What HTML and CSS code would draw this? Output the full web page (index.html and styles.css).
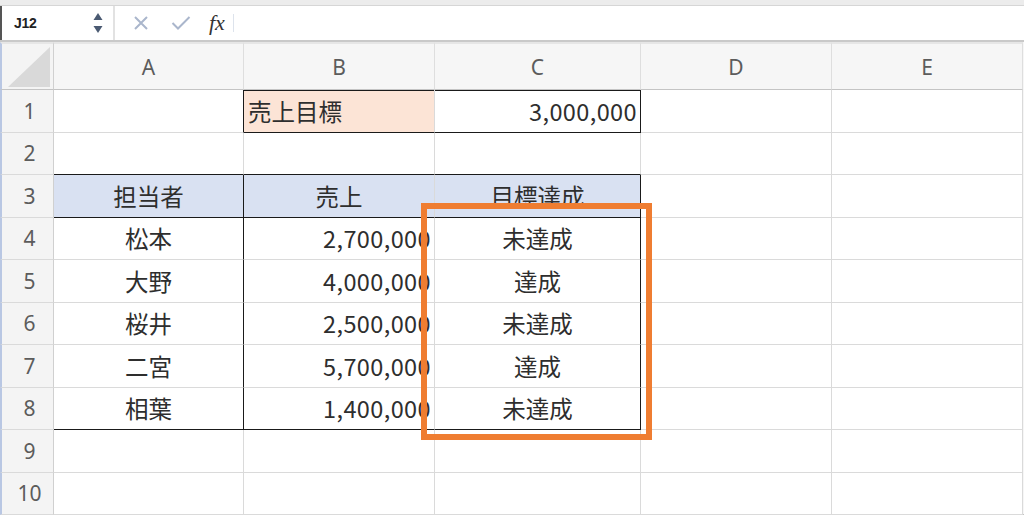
FILE: index.html
```html
<!DOCTYPE html>
<html lang="ja">
<head>
<meta charset="utf-8">
<link rel="stylesheet" href="styles.css">
</head>
<body>
<div class="topstrip"></div>
<div class="fbar">
  <div class="namebox">
    <span class="ref">J12</span>
    <span class="spin">
      <svg width="10" height="22" viewBox="0 0 10 22"><path d="M5 1 L9.5 8 L0.5 8 Z" fill="#4a5a72"/><path d="M0.5 14 L9.5 14 L5 21 Z" fill="#4a5a72"/></svg>
    </span>
  </div>
  <div class="ficons">
    <svg class="ic" width="16" height="16" viewBox="0 0 16 16"><path d="M2 2 L14 14 M14 2 L2 14" stroke="#aab6cc" stroke-width="2" fill="none"/></svg>
    <svg class="ic" width="20" height="16" viewBox="0 0 20 16"><path d="M1.5 8 L7 13.5 L18.5 2" stroke="#aab6cc" stroke-width="2" fill="none"/></svg>
    <span class="fx">fx</span>
    <span class="fsep"></span>
  </div>
</div>
<div class="sheet">
  <div class="corner"><svg width="42" height="40" viewBox="0 0 42 40"><path d="M42 0 L42 40 L0 40 Z" fill="#d9d9d9"/></svg></div>
  <div class="ch">A</div><div class="ch">B</div><div class="ch">C</div><div class="ch">D</div><div class="ch">E</div>

  <div class="rh">1</div>
  <div class="c bR"></div>
  <div class="c peach bB bT">売上目標</div>
  <div class="c num bR bB bT">3,000,000</div>
  <div class="c"></div><div class="c"></div>

  <div class="rh">2</div>
  <div class="c bB"></div><div class="c bB"></div><div class="c bB"></div>
  <div class="c"></div><div class="c"></div>

  <div class="rh">3</div>
  <div class="c blue ctr bR bB">担当者</div>
  <div class="c blue ctr bB">売上</div>
  <div class="c blue ctr bR bB">目標達成</div>
  <div class="c"></div><div class="c"></div>

  <div class="rh">4</div>
  <div class="c ctr bR">松本</div>
  <div class="c num">2,700,000</div>
  <div class="c ctr bR">未達成</div>
  <div class="c"></div><div class="c"></div>

  <div class="rh">5</div>
  <div class="c ctr bR">大野</div>
  <div class="c num">4,000,000</div>
  <div class="c ctr bR">達成</div>
  <div class="c"></div><div class="c"></div>

  <div class="rh">6</div>
  <div class="c ctr bR">桜井</div>
  <div class="c num">2,500,000</div>
  <div class="c ctr bR">未達成</div>
  <div class="c"></div><div class="c"></div>

  <div class="rh">7</div>
  <div class="c ctr bR">二宮</div>
  <div class="c num">5,700,000</div>
  <div class="c ctr bR">達成</div>
  <div class="c"></div><div class="c"></div>

  <div class="rh">8</div>
  <div class="c ctr bR bB">相葉</div>
  <div class="c num bB">1,400,000</div>
  <div class="c ctr bR bB">未達成</div>
  <div class="c"></div><div class="c"></div>

  <div class="rh">9</div>
  <div class="c"></div><div class="c"></div><div class="c"></div><div class="c"></div><div class="c"></div>

  <div class="rh">10</div>
  <div class="c"></div><div class="c"></div><div class="c"></div><div class="c"></div><div class="c"></div>

  <div class="highlight"></div>
</div>
</body>
</html>
```
FILE: styles.css
```css
* { box-sizing: border-box; }
html, body {
  margin: 0;
  padding: 0;
  width: 1024px;
  height: 515px;
  overflow: hidden;
  background: #ffffff;
  font-family: "Noto Sans CJK JP", "Noto Sans", sans-serif;
  color: #2a2a2a;
}
.topstrip {
  height: 6px;
  background: #ececec;
  border-bottom: 1px solid #d6d6d6;
}
.fbar {
  height: 34px;
  display: flex;
  align-items: stretch;
  background: #ffffff;
  border-left: 2px solid #555;
}
.namebox {
  width: 113px;
  display: flex;
  align-items: center;
  justify-content: space-between;
  padding: 0 10px 0 12px;
  border-right: 2px solid #e2e2e2;
}
.ref {
  font-family: "Liberation Sans", sans-serif;
  font-weight: bold;
  font-size: 14px;
  color: #222;
  letter-spacing: -0.3px;
}
.spin { display: flex; align-items: center; }
.ficons {
  display: flex;
  align-items: center;
  padding-left: 18px;
}
.ic { display: block; }
.ic:first-child { margin-right: 22px; }
.ic:nth-child(2) { margin-right: 18px; }
.fx {
  font-family: "Liberation Serif", serif;
  font-style: italic;
  font-size: 22px;
  color: #333;
  margin-right: 8px;
  line-height: 1;
}
.fsep {
  width: 1px;
  height: 18px;
  background: #dde3ec;
}
.sheet {
  position: relative;
  border-top: 2px solid #c9c9c9;
  height: 475px;
  display: grid;
  grid-template-columns: 54px 190px 191px 206px 191px 191px 1fr;
  grid-template-rows: 48px repeat(10, 1fr);
  background: #ffffff;
}
.sheet > .corner, .sheet > .ch { border-top: 2px solid #e6e6e6; }
.corner {
  background: #f4f4f4;
  border-right: 1px solid #d0d0d0;
  border-bottom: 1px solid #c4c4c4;
  border-left: 2px solid #b9c7e3;
  display: flex;
  align-items: flex-end;
  justify-content: flex-end;
  padding: 0 3px 2px 0;
}
.ch {
  background: #f6f6f6;
  border-right: 1px solid #dedede;
  border-bottom: 1px solid #c4c4c4;
  display: flex;
  align-items: center;
  justify-content: center;
  font-family: "Noto Sans", sans-serif;
  font-size: 21px;
  color: #5c5c5c;
}
.sheet::after {
  content: "";
  grid-column: 7;
  grid-row: 1 / span 11;
  background: #f6f6f6;
  border-bottom: 1px solid #c4c4c4;
}
.rh {
  grid-column: 1;
  background: #f4f4f4;
  border-right: 1px solid #d0d0d0;
  border-bottom: 1px solid #dadada;
  border-left: 2px solid #b9c7e3;
  display: flex;
  align-items: center;
  justify-content: center;
  font-family: "Noto Sans", sans-serif;
  font-size: 21px;
  color: #5c5c5c;
  padding-left: 4px;
}
.c {
  border-right: 1px solid #dadada;
  border-bottom: 1px solid #dadada;
  display: flex;
  align-items: center;
  font-size: 23.5px;
  color: #2e2e2e;
  padding: 0 4px;
  white-space: nowrap;
}
.c.ctr { justify-content: center; }
.c.num { justify-content: flex-end; letter-spacing: 0.4px; padding-right: 3px; }
.c.peach { background: #fce4d6; }
.c.blue { background: #d9e1f2; }
.c.bR { border-right-color: #1a1a1a; }
.c.bB { border-bottom-color: #1a1a1a; }
.c.bT { box-shadow: inset 0 1px 0 #1a1a1a; }
.highlight {
  position: absolute;
  left: 421px;
  top: 161px;
  width: 231px;
  height: 237px;
  border: 6px solid #ef7d31;
  pointer-events: none;
}
```
